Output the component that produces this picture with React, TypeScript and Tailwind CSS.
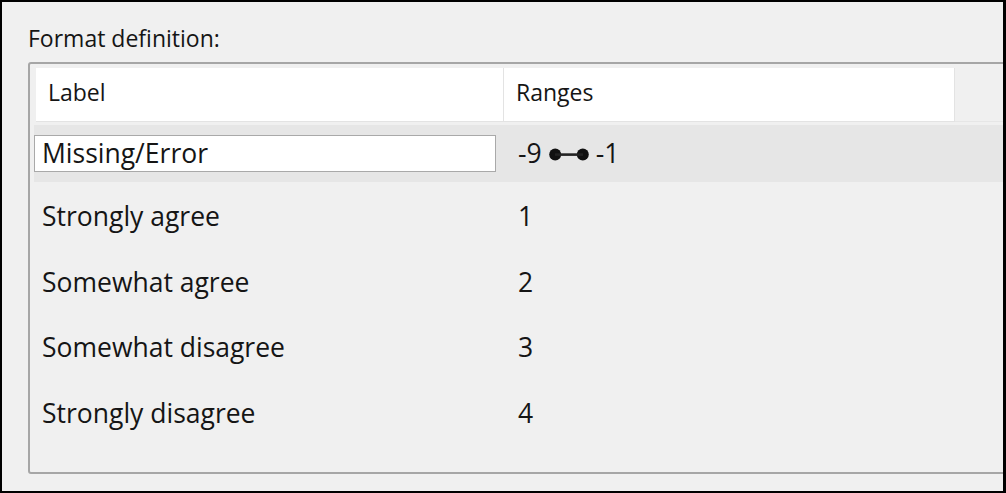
export default function App() {
  const rows = [
    { label: "Strongly agree", range: "1" },
    { label: "Somewhat agree", range: "2" },
    { label: "Somewhat disagree", range: "3" },
    { label: "Strongly disagree", range: "4" },
  ];

  return (
    <div
      className="h-[493px] w-[1006px] overflow-hidden border-2 border-r-[3px] border-black bg-[#f0f0f0] text-[#151515]"
      style={{ fontFamily: '"Open Sans", "Noto Sans", sans-serif' }}
    >
      <div className="pl-[26px] pt-[20px] text-[23px] leading-[32px]">Format definition:</div>

      <div className="ml-[26px] mt-[8px] h-[412px] w-[1010px] rounded-[3px] border-2 border-[#a6a6a6] px-[6px] pt-[4px]">
        {/* header */}
        <div className="flex h-[54px] text-[23px]">
          <div className="flex w-[468px] items-center border-b border-r border-[#e3e3e3] bg-white pb-[4px] pl-[12px]">
            Label
          </div>
          <div className="flex w-[451px] items-center border-b border-r border-[#e3e3e3] bg-white pb-[4px] pl-[12px]">
            Ranges
          </div>
          <div className="flex-1 border-b border-[#e6e6e6]" />
        </div>

        {/* selected row */}
        <div className="-ml-[2px] mt-[3px] flex h-[57px] items-center bg-[#e6e6e6] text-[26.5px]">
          <div className="flex h-[37px] w-[462px] items-center border border-[#a9a9a9] bg-white pl-[7px]">
            Missing/Error
          </div>
          <div className="ml-[22px] flex items-center gap-[7px]">
            <span>-9</span>
            <svg width="40" height="13" viewBox="0 0 40 13" className="mt-[2px]">
              <circle cx="6.2" cy="6.5" r="6" fill="#111" />
              <circle cx="33.8" cy="6.5" r="6" fill="#111" />
              <rect x="6" y="5.3" width="28" height="2.6" fill="#222" />
            </svg>
            <span>-1</span>
          </div>
        </div>

        <div className="pt-[2px]">
          {rows.map((r) => (
            <div key={r.label} className="flex h-[65.7px] items-center text-[26.5px]">
              <div className="w-[475px] pl-[6px]">{r.label}</div>
              <div className="pl-[7px]">{r.range}</div>
            </div>
          ))}
        </div>
      </div>
    </div>
  );
}
